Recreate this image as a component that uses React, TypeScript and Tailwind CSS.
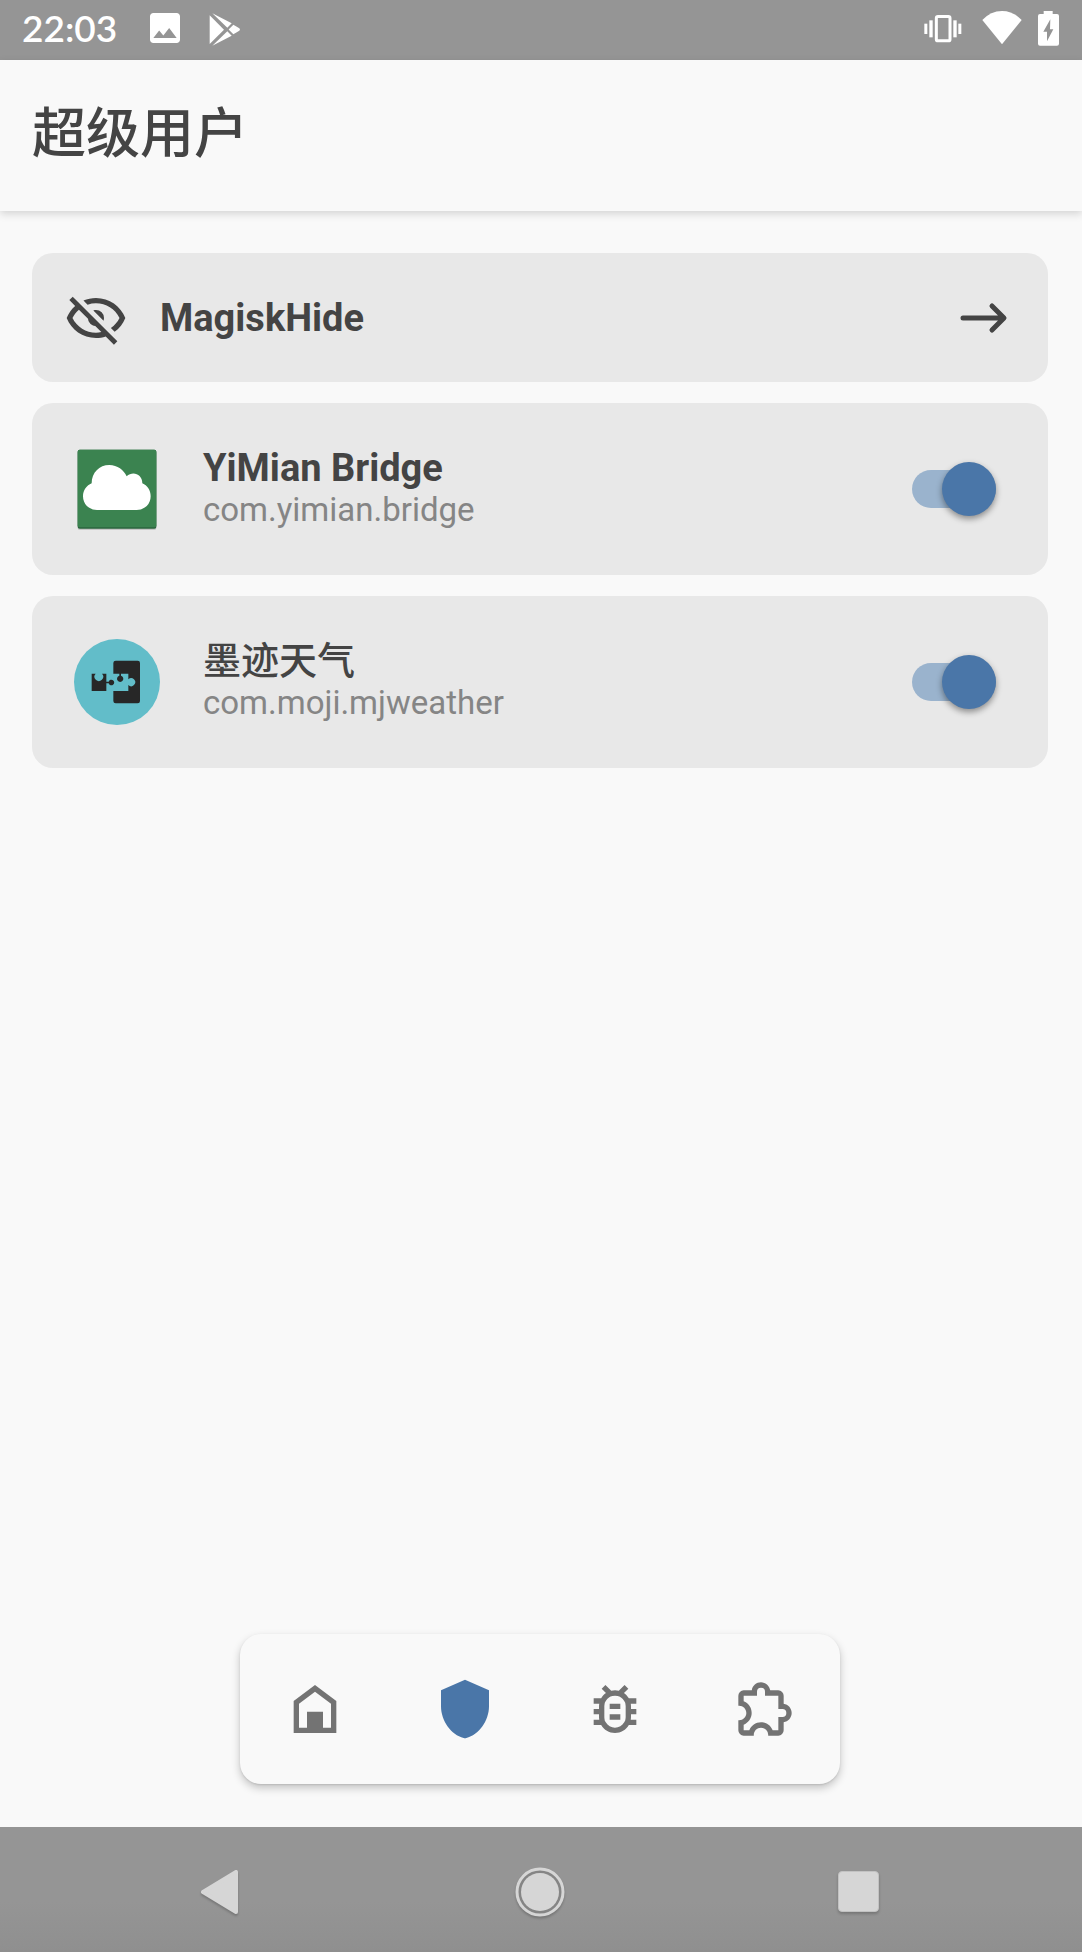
import React, { useState } from "react";

const HOME =
  "M12,3L20,9V21H4V9L12,3M12,5.5L6,10V19H9V13H15V19H18V10L12,5.5Z";
const SHIELD =
  "M21,11C21,16.5 17.16,21.74 12.5,22.9Q12,23.1 11.5,22.9C6.84,21.74 3,16.5 3,11V5L12,1L21,5V11Z";
const BUG =
  "M20 8h-2.81a5.985 5.985 0 0 0-1.82-1.96L17 4.41 15.59 3l-2.17 2.17a6.002 6.002 0 0 0-2.83 0L8.41 3 7 4.41l1.62 1.63C7.88 6.55 7.26 7.22 6.81 8H4v2h2.09c-.05.33-.09.66-.09 1v1H4v2h2v1c0 .34.04.67.09 1H4v2h2.81c1.04 1.79 2.97 3 5.19 3s4.15-1.21 5.19-3H20v-2h-2.09c.05-.33.09-.66.09-1v-1h2v-2h-2v-1c0-.34-.04-.67-.09-1H20V8zm-4 4v3c0 .22-.03.47-.07.7l-.1.65-.37.65c-.72 1.24-2.04 2-3.46 2s-2.74-.77-3.46-2l-.37-.64-.1-.65A4.54 4.54 0 0 1 8 15v-4c0-.23.03-.48.07-.7l.1-.65.37-.65c.3-.52.72-.97 1.21-1.31l.57-.39.74-.18a3.91 3.91 0 0 1 1.89 0l.68.16.61.42c.5.34.91.78 1.21 1.31l.38.65.1.65c.04.22.07.47.07.69v1zm-6 2h4v2h-4v-2zm0-4h4v2h-4v-2z";
const PUZZLE =
  "M22,13.5C22,15.26 20.7,16.72 19,16.96V20A2,2 0 0,1 17,22H13.2V21.7A2.7,2.7 0 0,0 10.5,19C9,19 7.8,20.21 7.8,21.7V22H4A2,2 0 0,1 2,20V16.2H2.3C3.79,16.2 5,15 5,13.5C5,12 3.79,10.8 2.3,10.8H2V7A2,2 0 0,1 4,5H7.04C7.28,3.3 8.74,2 10.5,2C12.26,2 13.72,3.3 13.96,5H17A2,2 0 0,1 19,7V10.04C20.7,10.28 22,11.74 22,13.5M17,15H18.5A1.5,1.5 0 0,0 20,13.5A1.5,1.5 0 0,0 18.5,12H17V7H12V5.5A1.5,1.5 0 0,0 10.5,4A1.5,1.5 0 0,0 9,5.5V7H4V9.12C5.76,9.8 7,11.5 7,13.5C7,15.5 5.75,17.2 4,17.88V20H6.12C6.8,18.25 8.5,17 10.5,17C12.5,17 14.2,18.25 14.88,20H17V15Z";
const EYE_OFF =
  "M2,5.27L3.28,4L20,20.72L18.73,22L15.65,18.92C14.5,19.3 13.28,19.5 12,19.5C7,19.5 2.73,16.39 1,12C1.69,10.24 2.79,8.69 4.19,7.46L2,5.27M12,9A3,3 0 0,1 15,12C15,12.35 14.94,12.69 14.83,13L11,9.17C11.31,9.06 11.65,9 12,9M12,4.5C17,4.5 21.27,7.61 23,12C22.18,14.08 20.79,15.88 19,17.19L17.58,15.76C18.94,14.82 20.06,13.54 20.82,12C19.17,8.64 15.76,6.5 12,6.5C10.91,6.5 9.84,6.68 8.84,7L7.3,5.47C8.74,4.85 10.33,4.5 12,4.5M3.18,12C4.83,15.36 8.24,17.5 12,17.5C12.69,17.5 13.37,17.43 14,17.29L11.72,15C10.29,14.85 9.15,13.71 9,12.28L5.6,8.87C4.61,9.72 3.78,10.78 3.18,12Z";
const IMAGE =
  "M21 19V5c0-1.1-.9-2-2-2H5c-1.1 0-2 .9-2 2v14c0 1.1.9 2 2 2h14c1.1 0 2-.9 2-2zM8.5 13.5l2.5 3.01L14.5 12l4.5 6H5l3.5-4.5z";

function Glyph({ d, className }: { d: string; className: string }) {
  return (
    <svg viewBox="0 0 24 24" className={className} fill="currentColor" aria-hidden="true">
      <path d={d} />
    </svg>
  );
}

function StatusBar() {
  return (
    <div className="flex h-[60px] items-center justify-between bg-[#959595] pr-[23px] pb-1 pl-[22px] text-white">
      <div className="flex items-center">
        <time className="font-['Lato',sans-serif] text-[37px] leading-10 font-semibold">22:03</time>
        <Glyph d={IMAGE} className="ml-7 size-10" />
        <svg viewBox="626 30 96 105" className="ml-6 h-[35px] w-8" fill="currentColor" aria-hidden="true">
          <path d="M628 43L671 86L628 129Z" />
          <path d="M636 37L694 67L681 80Z" />
          <path d="M636 134L694 104L681 91Z" />
          <path d="M699 71L717 82Q721 85.500 717 89L699 100L685 85.500Z" />
        </svg>
      </div>
      <div className="flex items-center">
        <svg viewBox="133 30 114 105" className="h-[35px] w-[38px]" fill="currentColor" aria-hidden="true">
          <rect x="170" y="46.500" width="41" height="73" rx="5" fill="none" stroke="currentColor" strokeWidth="9" />
          <rect x="149" y="58" width="10" height="51" />
          <rect x="134" y="68" width="9" height="31" />
          <rect x="221" y="58" width="10" height="51" />
          <rect x="236" y="68" width="9" height="31" />
        </svg>
        <svg viewBox="306 30 120 105" className="ml-5 h-[35px] w-10" fill="currentColor" aria-hidden="true">
          <path d="M307 57Q332 30 366 30T425 57L366 130Z" />
        </svg>
        <svg viewBox="474 30 63 105" className="ml-4 h-[35px] w-[21px]" fill="currentColor" aria-hidden="true">
          <path
            fillRule="evenodd"
            d="M491 30H518V39H531Q537 39 537 45V128Q537 134 531 134H480Q474 134 474 128V45Q474 39 480 39H491ZM511 55L490 92H501V121L520 85H510Z"
          />
        </svg>
      </div>
    </div>
  );
}

function BridgeIcon() {
  return (
    <svg viewBox="0 6 258 258" className="size-[86px] shrink-0" aria-hidden="true">
      <rect x="11" y="21" width="236" height="237" rx="6" fill="#c6c6c6" />
      <rect x="11" y="17" width="236" height="237" rx="6" fill="#2b653e" />
      <rect x="11" y="17" width="236" height="233" rx="6" fill="#3b8350" />
      <path
        d="M69 198C44 198 27 180 27 157C27 139 38 124 53 118C53 86 76 63 106 63C130 63 150 78 158 97C176 80 205 90 205 118C220 124 230 139 230 157C230 180 213 198 188 198Z"
        fill="#fff"
      />
    </svg>
  );
}

function WeatherIcon() {
  return (
    <svg viewBox="0 0 258 258" className="size-[86px] shrink-0" aria-hidden="true">
      <circle cx="129" cy="129" r="129" fill="#62bdc9" />
      <rect x="118" y="65" width="80" height="128" rx="7" fill="#272727" />
      <path d="M116 104H163V121A12 12 0 1 1 163 138V156H116Z" fill="#62bdc9" />
      <path d="M136 102H141V110A9.500 9.500 0 1 1 136 110Z" fill="#272727" />
      <path
        d="M53 104H65A13 13 0 1 0 84 104H97V128H104A8.500 8.500 0 1 1 104 133H97V156H53Z"
        fill="#272727"
      />
    </svg>
  );
}

function AppRow({
  icon,
  name,
  pkg,
  cjk = false,
}: {
  icon: React.ReactNode;
  name: string;
  pkg: string;
  cjk?: boolean;
}) {
  const [on, setOn] = useState(true);
  return (
    <label className="flex h-[172px] items-center rounded-[21px] bg-[#e8e8e8] pr-[52px] pl-[42px]">
      {icon}
      <span className="ml-[43px] flex flex-1 flex-col text-[#444]">
        <span
          className={
            cjk ? "text-[38px] leading-[42px] font-medium" : "text-[38px] leading-[42px] font-bold"
          }
        >
          {name}
        </span>
        <span className="text-[33px] leading-[42px] text-[#858585]">{pkg}</span>
      </span>
      <input
        type="checkbox"
        role="switch"
        checked={on}
        onChange={(e) => setOn(e.target.checked)}
        className="relative h-[38px] w-[84px] appearance-none rounded-full bg-[#bbb] before:absolute before:-top-2 before:left-0 before:size-[54px] before:rounded-full before:bg-white before:shadow-[0_3px_6px_rgba(0,0,0,0.4)] checked:bg-[#9ab3cd] checked:before:left-[30px] checked:before:bg-[#4a76a8]"
      />
    </label>
  );
}

const tabs = [
  { label: "主页", d: HOME, active: false },
  { label: "超级用户", d: SHIELD, active: true },
  { label: "日志", d: BUG, active: false },
  { label: "模块", d: PUZZLE, active: false },
];

export default function App() {
  return (
    <div className="flex min-h-screen flex-col bg-[#f9f9f9] font-['Roboto','Noto_Sans_CJK_SC',sans-serif]">
      <StatusBar />
      <header className="flex h-[151px] items-center px-8 pb-0.5 shadow-[0_3px_8px_rgba(0,0,0,0.15)]">
        <h1 className="text-[54px] leading-[80px] font-medium text-[#444]">超级用户</h1>
      </header>

      <main className="flex flex-1 flex-col gap-[21px] pt-[42px] pr-[34px] pl-8">
        <button
          type="button"
          className="flex h-[129px] items-center rounded-[21px] bg-[#e8e8e8] pr-10 pl-8 text-[#444]"
        >
          <Glyph d={EYE_OFF} className="size-16" />
          <span className="ml-8 flex-1 text-left text-[38px] leading-[44px] font-bold">MagiskHide</span>
          <svg
            viewBox="0 0 48 48"
            className="size-12"
            fill="none"
            stroke="currentColor"
            strokeWidth="5"
            strokeLinecap="round"
            strokeLinejoin="round"
            aria-hidden="true"
          >
            <path d="M3 24H43M32 12L44 24L32 36" />
          </svg>
        </button>
        <AppRow icon={<BridgeIcon />} name="YiMian Bridge" pkg="com.yimian.bridge" />
        <AppRow icon={<WeatherIcon />} name="墨迹天气" pkg="com.moji.mjweather" cjk />
      </main>

      <div className="flex justify-center pr-0.5 pb-[43px]">
        <nav className="grid h-[150px] w-[600px] grid-cols-4 rounded-[21px] bg-[#f9f9f9] shadow-[0_4px_8px_rgba(0,0,0,0.22),0_1px_2px_rgba(0,0,0,0.1)]">
          {tabs.map((t) => (
            <button
              key={t.label}
              type="button"
              aria-label={t.label}
              className={
                t.active
                  ? "flex items-center justify-center text-[#4a76a8]"
                  : "flex items-center justify-center text-[#737373]"
              }
            >
              <Glyph d={t.d} className="size-16" />
            </button>
          ))}
        </nav>
      </div>

      <div className="flex h-[125px] items-center justify-center bg-linear-to-b from-[#959595] from-60% to-[#8f8f8f] pt-1 pr-1 text-[#d6d6d6]">
        <button type="button" aria-label="返回" className="flex w-80 justify-center">
          <svg viewBox="0 0 48 52" className="h-[52px] w-12 drop-shadow-[0_2px_1px_rgba(0,0,0,0.2)]" aria-hidden="true">
            <path
              d="M6 26L39 6V46Z"
              fill="currentColor"
              stroke="currentColor"
              strokeWidth="4"
              strokeLinejoin="round"
            />
          </svg>
        </button>
        <button type="button" aria-label="主屏幕" className="flex w-[318px] justify-center">
          <svg viewBox="0 0 52 52" className="size-[52px] drop-shadow-[0_2px_1px_rgba(0,0,0,0.2)]" aria-hidden="true">
            <circle cx="26" cy="26" r="23" fill="#858585" stroke="currentColor" strokeWidth="3" />
            <circle cx="26" cy="26" r="19" fill="currentColor" />
          </svg>
        </button>
        <button type="button" aria-label="最近任务" className="flex w-[318px] justify-center">
          <span className="size-[41px] rounded-[4px] border border-[#c2c2c2] bg-[#d6d6d6] shadow-[0_2px_3px_rgba(0,0,0,0.2)]" />
        </button>
      </div>
    </div>
  );
}
